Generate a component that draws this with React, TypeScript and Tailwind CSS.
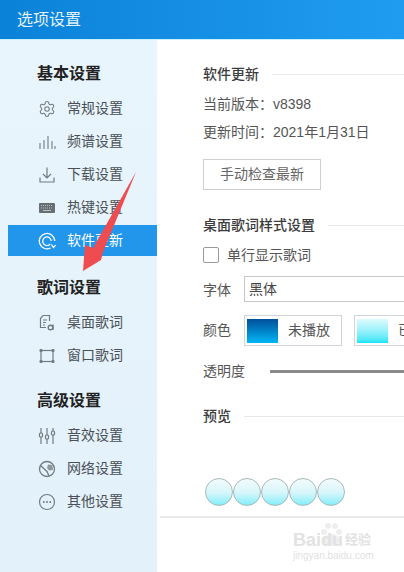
import type { ReactNode } from 'react';
import { Settings } from 'lucide-react';

const gray = '#737b80';

function GearIcon() {
  return <Settings size={18} color={gray} strokeWidth={1.4} />;
}

function BarsIcon() {
  return (
    <svg width="18" height="18" viewBox="0 0 18 18" fill="none" stroke={gray} strokeWidth="1.1">
      <path d="M2 10v6M6 7v9M10 3v13M14 8v8M17 13v3" />
    </svg>
  );
}

function DownloadIcon() {
  return (
    <svg width="18" height="18" viewBox="0 0 18 18" fill="none" stroke={gray} strokeWidth="1.2">
      <path d="M9 1.5v10M5 8l4 4 4-4M2 11.5v4.5h14v-4.5" />
    </svg>
  );
}

function KeyboardIcon() {
  return (
    <svg width="18" height="18" viewBox="0 0 18 18" fill="none">
      <rect x="1" y="4" width="16" height="10" rx="1" fill="#666e73" />
      <path d="M3 6.5h12M3 9h12" stroke="#b9c2c7" strokeWidth="1" strokeDasharray="1 1" />
      <path d="M5 11.5h8" stroke="#b9c2c7" strokeWidth="1" />
    </svg>
  );
}

function RefreshIcon() {
  return (
    <svg width="18" height="18" viewBox="0 0 18 18" fill="none" stroke="#fff" strokeWidth="1.3">
      <path d="M12.5 16A7.7 7.7 0 1 1 16.7 9" />
      <path d="M12.3 12A4.3 4.3 0 1 1 13.3 9" />
      <path d="M13.5 12.5l1.8 3 2.4-2.4" strokeWidth="1.2" />
    </svg>
  );
}

function LyricIcon() {
  return (
    <svg width="18" height="18" viewBox="0 0 18 18" fill="none" stroke={gray} strokeWidth="1.2">
      <path d="M8 13.5H2.500V4.500L5 1.500h6.500V7" />
      <path d="M5 6h4M5 8.500h3M5 11h2" />
      <circle cx="12.500" cy="13.500" r="2.300" strokeWidth="1.4" />
      <path d="M15 10.500V16" strokeWidth="1.4" />
    </svg>
  );
}

function WindowIcon() {
  return (
    <svg width="18" height="18" viewBox="0 0 18 18" fill="none" stroke={gray} strokeWidth="1.2">
      <rect x="3" y="3.500" width="12" height="11" />
      <g fill={gray} stroke="none">
        <rect x="1.500" y="2" width="3" height="3" rx="1" />
        <rect x="13.500" y="2" width="3" height="3" rx="1" />
        <rect x="1.500" y="13" width="3" height="3" rx="1" />
        <rect x="13.500" y="13" width="3" height="3" rx="1" />
      </g>
    </svg>
  );
}

function SlidersIcon() {
  return (
    <svg width="18" height="18" viewBox="0 0 18 18" fill="none" stroke={gray} strokeWidth="1.2">
      <path d="M3 1v16M9 1v16M15 1v16" />
      <rect x="1.500" y="6" width="3" height="4" rx="1" fill="#e5f3fb" />
      <rect x="7.500" y="8" width="3" height="4" rx="1" fill="#e5f3fb" />
      <rect x="13.500" y="4" width="3" height="4" rx="1" fill="#e5f3fb" />
    </svg>
  );
}

function GlobeIcon() {
  return (
    <svg width="18" height="18" viewBox="0 0 18 18" fill="none" stroke={gray} strokeWidth="1.3">
      <circle cx="9" cy="9" r="7.500" />
      <path d="M2.500 5.500 9 11.500l2 4.500" />
      <path d="M10 4.500l4.500 .5.500 5-4 .5-2-2.500Z" fill="#8e979c" stroke="none" />
    </svg>
  );
}

function MoreIcon() {
  return (
    <svg width="18" height="18" viewBox="0 0 18 18" fill="none" stroke={gray} strokeWidth="1.2">
      <circle cx="9" cy="9" r="7.500" />
      <g fill={gray} stroke="none">
        <circle cx="5.800" cy="9" r="1" />
        <circle cx="9" cy="9" r="1" />
        <circle cx="12.200" cy="9" r="1" />
      </g>
    </svg>
  );
}

function NavItem({ icon, label, active }: { icon: ReactNode; label: string; active?: boolean }) {
  return (
    <div className={`my-px flex h-[31px] items-center pl-[30px] ${active ? 'bg-[#2196ea] text-white' : 'text-[#4a5055]'}`}>
      <span className="flex w-[29px] shrink-0">{icon}</span>
      <span className="text-[14px]">{label}</span>
    </div>
  );
}

function NavTitle({ children, className }: { children: ReactNode; className: string }) {
  return <div className={`h-6 pl-[29px] text-[16px] leading-6 font-bold text-[#222] ${className}`}>{children}</div>;
}

function SectionTitle({ title, className }: { title: string; className: string }) {
  return (
    <div className={`flex h-5 items-center gap-[13px] ${className}`}>
      <span className="text-[14px] font-medium text-[#3c3c3c]">{title}</span>
      <span className="h-px flex-1 bg-[#e8e8e8]" />
    </div>
  );
}

function Ball() {
  return (
    <div className="h-7 w-7 shrink-0 rounded-full border-[1.5px] border-[#a9b8bb] bg-gradient-to-b from-[#f2fbfd] via-[#d9f6fb] to-[#80eefa]" />
  );
}

export default function App() {
  return (
    <div className="relative h-[572px] w-[404px] overflow-hidden bg-white font-['Liberation_Sans','Noto_Sans_CJK_SC',sans-serif]">
      <header className="flex h-10 items-center border-b border-[#c9f1fb] bg-gradient-to-r from-[#0a82d8] to-[#1f9cf0] pl-[17px] text-[16px] text-[#e4f3ff]">
        选项设置
      </header>

      <div className="flex h-[532px]">
        <aside className="flex w-[157px] shrink-0 flex-col bg-gradient-to-b from-[#e9f5fc] to-[#e3f1fb] pl-2">
          <NavTitle className="mt-[22px] mb-[6px]">基本设置</NavTitle>
          <NavItem icon={<GearIcon />} label="常规设置" />
          <NavItem icon={<BarsIcon />} label="频谱设置" />
          <NavItem icon={<DownloadIcon />} label="下载设置" />
          <NavItem icon={<KeyboardIcon />} label="热键设置" />
          <NavItem icon={<RefreshIcon />} label="软件更新" active />
          <NavTitle className="mt-[19px] mb-[6px]">歌词设置</NavTitle>
          <NavItem icon={<LyricIcon />} label="桌面歌词" />
          <NavItem icon={<WindowIcon />} label="窗口歌词" />
          <NavTitle className="mt-[17px] mb-[6px]">高级设置</NavTitle>
          <NavItem icon={<SlidersIcon />} label="音效设置" />
          <NavItem icon={<GlobeIcon />} label="网络设置" />
          <NavItem icon={<MoreIcon />} label="其他设置" />
        </aside>

        <main className="min-w-0 flex-1">
          <div className="pt-6 pl-[46px] text-[14px] text-[#555]">
            <SectionTitle title="软件更新" className="" />
            <div className="mt-[10px] flex h-5 items-center">当前版本：v8398</div>
            <div className="mt-2 flex h-5 items-center">更新时间：2021年1月31日</div>
            <button className="mt-[17px] block h-[31px] w-[118px] border border-[#cfcfcf] bg-white text-[14px] text-[#666]">
              手动检查最新
            </button>
            <SectionTitle title="桌面歌词样式设置" className="mt-[25px]" />
            <div className="mt-[10px] flex h-5 items-center">
              <span className="mr-2 h-4 w-4 rounded-[2px] border border-[#999]" />
              单行显示歌词
            </div>
            <div className="mt-[11px] flex h-[26px] items-center">
              <span className="w-[41px] pt-[2px]">字体</span>
              <div className="flex h-[26px] flex-1 items-center border border-r-0 border-[#c8c8c8] pl-1 text-[14px] text-[#444]">黑体</div>
            </div>
            <div className="mt-[13px] flex h-[31px] items-center overflow-hidden">
              <span className="w-[41px] shrink-0">颜色</span>
              <div className="flex h-[31px] w-[98px] shrink-0 items-center border border-[#cfd5da] pl-[2px]">
                <span className="h-[24px] w-[31px] bg-gradient-to-b from-[#02509a] to-[#00b7f6]" />
                <span className="ml-[10px]">未播放</span>
              </div>
              <div className="ml-[12px] flex h-[31px] w-[98px] shrink-0 items-center border border-[#cfd5da] pl-[2px]">
                <span className="h-[24px] w-[31px] bg-gradient-to-b from-[#dcfbfd] to-[#00e5f8]" />
                <span className="ml-[10px]">已播放</span>
              </div>
            </div>
            <div className="mt-[15px] flex h-5 items-center">
              <span className="w-[67px]">透明度</span>
              <span className="h-[3px] flex-1 bg-[#8a8a8a]" />
            </div>
            <SectionTitle title="预览" className="mt-[25px]" />
            <div className="mt-[52px] ml-[2px] flex">
              <Ball />
              <Ball />
              <Ball />
              <Ball />
              <Ball />
            </div>
          </div>
          <div className="mt-[10px] ml-[3px] h-[2px] bg-[#e8e8e8]" />
        </main>
      </div>

      {/* red arrow drawn over the page */}
      <svg className="absolute top-[168px] left-[78px]" width="60" height="106" viewBox="0 0 60 106">
        <path d="M58 4 25 84l-2 8L5 103l2-26 8 3Z" fill="#ee4c50" />
      </svg>

      {/* watermark */}
      <svg className="absolute top-[522px] left-[318px]" width="26" height="26" viewBox="0 0 26 26" fill="#eeeeee">
        <circle cx="6" cy="10" r="3" />
        <circle cx="10" cy="4" r="3" />
        <circle cx="17" cy="4" r="3" />
        <circle cx="21" cy="10" r="3" />
        <ellipse cx="13.500" cy="18" rx="8" ry="6" />
      </svg>
      <div className="absolute top-[530px] left-[293px] text-[#e2e2e2]">
        <div className="flex items-center text-[18px] leading-[20px] font-bold">
          <span>Baidu</span>
          <span className="ml-[2px] text-[13px]">经验</span>
        </div>
        <div className="text-[10px] leading-[12px]">jingyan.baidu.com</div>
      </div>
    </div>
  );
}
